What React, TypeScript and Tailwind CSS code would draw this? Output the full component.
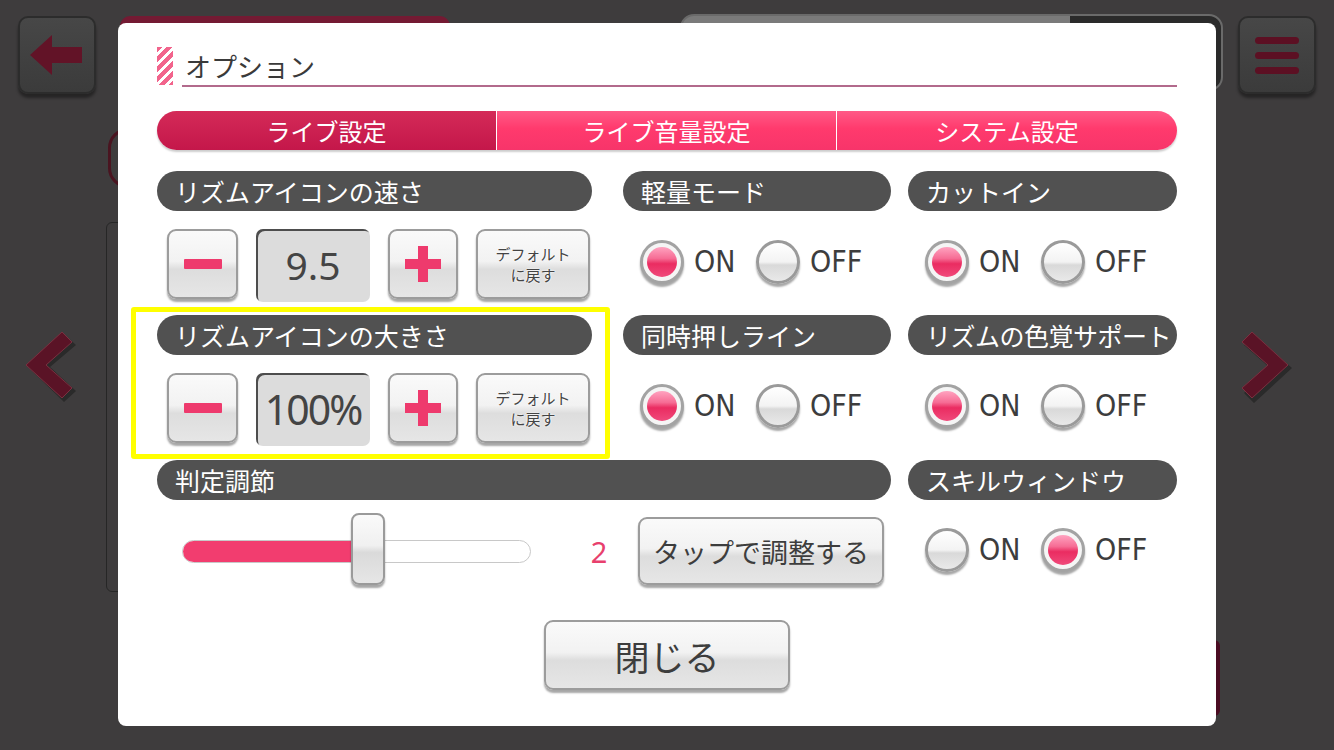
import React from "react";

const jp = "font-['Noto_Sans_CJK_JP','Noto_Sans',sans-serif]";
const narrow = "font-['Liberation_Sans_Narrow','DejaVu_Sans_Condensed',Roboto,sans-serif]";

const btnFace =
  "rounded-[9px] border-2 border-[#9c9c9c] bg-[linear-gradient(180deg,#fafafa_0%,#f2f2f2_46%,#dddddd_58%,#e6e6e6_100%)] shadow-[0_3px_2px_rgba(0,0,0,0.35)]";

// Section header pill
const Label: React.FC<{ text: string; className?: string }> = ({ text, className }) => (
  <div
    className={`h-[40px] rounded-full bg-[#515151] pl-[18px] flex items-center text-white text-[25px] leading-none ${jp} ${className ?? ""}`}
  >
    {text}
  </div>
);

const Radio: React.FC<{ on: boolean }> = ({ on }) =>
  on ? (
    <div className="w-[44px] h-[44px] rounded-full border-[3px] border-[#a3a3a3] bg-[#f5f5f5] p-[4px] shadow-[0_3px_2px_rgba(0,0,0,0.35)]">
      <div className="w-full h-full rounded-full bg-[linear-gradient(180deg,#ffa3c0_0%,#f66d95_38%,#ea2c61_56%,#f04a7b_100%)]" />
    </div>
  ) : (
    <div className="w-[44px] h-[44px] rounded-full border-[3px] border-[#9a9a9a] bg-[linear-gradient(180deg,#ffffff_0%,#f3f3f3_50%,#d9d9d9_58%,#e9e9e9_100%)] shadow-[0_3px_2px_rgba(0,0,0,0.35)]" />
  );

// ON / OFF pair
const Toggle: React.FC<{ on: boolean }> = ({ on }) => (
  <div className="flex items-center pl-[17px]">
    <div className="w-[116px] flex items-center">
      <Radio on={on} />
      <span className={`ml-[10px] text-[30px] leading-none text-[#3d3d3d] ${narrow}`}>ON</span>
    </div>
    <div className="flex items-center">
      <Radio on={!on} />
      <span className={`ml-[10px] text-[30px] leading-none text-[#3d3d3d] ${narrow}`}>OFF</span>
    </div>
  </div>
);

const Stepper: React.FC<{ value: string; big?: boolean }> = ({ value, big }) => (
  <div className="flex items-start pl-[10px] h-[73px]">
    <div className={`w-[71px] h-[70px] flex items-center justify-center ${btnFace}`}>
      <div className="w-[38px] h-[10px] bg-[#ee3a6d] rounded-[1px]" />
    </div>
    <div
      className={`ml-[18px] w-[114px] h-[73px] rounded-[7px] bg-[#dcdcdc] shadow-[inset_2px_2px_0_#4d4d4d] flex items-center justify-center text-[#444] font-['Noto_Sans',sans-serif] ${big ? "text-[41px] tracking-[-2px]" : "text-[39px]"}`}
    >
      {value}
    </div>
    <div className={`ml-[18px] w-[70px] h-[70px] relative ${btnFace}`}>
      <div className="absolute left-1/2 top-1/2 -translate-x-1/2 -translate-y-1/2 w-[36px] h-[10px] bg-[#ee3a6d]" />
      <div className="absolute left-1/2 top-1/2 -translate-x-1/2 -translate-y-1/2 w-[10px] h-[36px] bg-[#ee3a6d]" />
    </div>
    <div
      className={`ml-[18px] w-[114px] h-[70px] flex flex-col items-center justify-center text-[15px] leading-[21px] text-[#444] ${jp} ${btnFace} [text-shadow:0_0_2px_#fff,0_0_2px_#fff]`}
    >
      <span>デフォルト</span>
      <span>に戻す</span>
    </div>
  </div>
);

const App: React.FC = () => {
  return (
    <div className="relative w-[1334px] h-[750px] overflow-hidden bg-[#3e3c3d]">
      {/* dimmed screen behind the dialog */}
      <div className="absolute left-[18px] top-[16px] w-[78px] h-[78px] rounded-[10px] bg-[linear-gradient(180deg,#474747,#3b3b3b)] border-2 border-[#2c2c2c] shadow-[0_4px_3px_rgba(0,0,0,0.4)] flex items-center justify-center">
        <svg width="54" height="40" viewBox="0 0 54 40">
          <polygon points="0,20 22,0 22,12 52,12 52,28 22,28 22,40" fill="#621327" />
        </svg>
      </div>
      <div className="absolute left-[1238px] top-[16px] w-[78px] h-[78px] rounded-[10px] bg-[linear-gradient(180deg,#474747,#3b3b3b)] border-2 border-[#2c2c2c] shadow-[0_4px_3px_rgba(0,0,0,0.4)] flex flex-col items-center justify-center gap-[8px]">
        <div className="w-[44px] h-[7px] rounded-full bg-[#5c1023]" />
        <div className="w-[44px] h-[7px] rounded-full bg-[#5c1023]" />
        <div className="w-[44px] h-[7px] rounded-full bg-[#5c1023]" />
      </div>
      <div className="absolute left-[120px] top-[16px] w-[330px] h-[20px] rounded-t-[10px] bg-[#741a33]" />
      <div className="absolute left-[680px] top-[14px] w-[543px] h-[77px] rounded-[14px] border-2 border-[#6a6a6a] bg-[linear-gradient(90deg,#7a7a7a_0%,#7a7a7a_72%,#2a2a2a_72%,#2a2a2a_100%)]" />
      <div className="absolute left-[106px] top-[222px] w-[30px] h-[370px] rounded-[6px] border border-[#262626]" />
      <div className="absolute left-[108px] top-[128px] w-[40px] h-[60px] rounded-full border-[3px] border-[#4a1420]" />
      <svg className="absolute left-[24px] top-[331px]" width="52" height="74" viewBox="0 0 52 74">
        <polygon points="4,36 40,3 52,14 26,36 52,60 40,71" fill="#2a2a2a" />
        <polygon points="2,34 38,1 48,11 22,34 48,57 38,67" fill="#5a1326" stroke="#7a3040" strokeWidth="1" />
      </svg>
      <svg className="absolute left-[1240px] top-[331px]" width="54" height="74" viewBox="0 0 54 74">
        <polygon points="14,4 52,37 14,72 4,62 30,37 4,14" fill="#2a2a2a" />
        <polygon points="12,1 48,34 12,67 2,57 28,34 2,11" fill="#5a1326" stroke="#7a3040" strokeWidth="1" />
      </svg>
      <div className="absolute left-[1210px] top-[640px] w-[10px] h-[76px] rounded-r-[6px] bg-[#4a0c22]" />

      {/* dialog */}
      <div className="absolute left-[118px] top-[23px] w-[1098px] h-[703px] rounded-[8px] bg-white px-[39px] pt-[24px]">
        {/* title */}
        <div className="flex items-end h-[40px]">
          <div className="w-[16px] h-[38px] mb-[2px] bg-[repeating-linear-gradient(135deg,#f2648c_0px,#f2648c_4px,#ffffff_4px,#ffffff_7px)]" />
          <div className={`ml-[9px] flex-1 h-full border-b-2 border-[#b26a8c] pl-[3px] flex items-center text-[26px] leading-none text-[#3a3a3a] ${jp}`}>
            オプション
          </div>
        </div>

        {/* tabs */}
        <div className={`mt-[24px] h-[39px] flex rounded-full overflow-hidden shadow-[0_2px_2px_rgba(0,0,0,0.2)] text-white text-[24px] leading-none ${jp}`}>
          <div className="w-[339px] flex items-center justify-center bg-[linear-gradient(180deg,#d42a58_0%,#c4174a_100%)]">ライブ設定</div>
          <div className="w-[1px] bg-white" />
          <div className="w-[339px] flex items-center justify-center bg-[linear-gradient(180deg,#ff5a87_0%,#ff3a6d_45%,#f7346a_100%)]">ライブ音量設定</div>
          <div className="w-[1px] bg-white" />
          <div className="flex-1 flex items-center justify-center bg-[linear-gradient(180deg,#ff5a87_0%,#ff3a6d_45%,#f7346a_100%)]">システム設定</div>
        </div>

        {/* row 1 */}
        <div className="mt-[21px] flex">
          <div className="w-[435px]">
            <Label text="リズムアイコンの速さ" />
            <div className="mt-[18px]">
              <Stepper value="9.5" />
            </div>
          </div>
          <div className="ml-[31px] w-[268px]">
            <Label text="軽量モード" />
            <div className="mt-[18px] h-[73px] flex items-center pb-[8px]">
              <Toggle on />
            </div>
          </div>
          <div className="ml-[17px] w-[269px]">
            <Label text="カットイン" />
            <div className="mt-[18px] h-[73px] flex items-center pb-[8px]">
              <Toggle on />
            </div>
          </div>
        </div>

        {/* row 2 */}
        <div className="mt-[13px] flex">
          <div className="w-[435px] relative">
            <Label text="リズムアイコンの大きさ" />
            <div className="mt-[18px]">
              <Stepper value="100%" big />
            </div>
            <div className="absolute -left-[26px] -right-[18px] -top-[8px] -bottom-[13px] border-[5px] border-[#ffff00] rounded-[3px] pointer-events-none" />
          </div>
          <div className="ml-[31px] w-[268px]">
            <Label text="同時押しライン" />
            <div className="mt-[18px] h-[73px] flex items-center pb-[8px]">
              <Toggle on />
            </div>
          </div>
          <div className="ml-[17px] w-[269px]">
            <Label text="リズムの色覚サポート" className="pl-[16px] text-[24px] tracking-[-0.5px]" />
            <div className="mt-[18px] h-[73px] flex items-center pb-[8px]">
              <Toggle on />
            </div>
          </div>
        </div>

        {/* row 3 */}
        <div className="mt-[14px] flex">
          <div className="w-[734px]">
            <Label text="判定調節" className="h-[39px]" />
            <div className="mt-[15px] h-[72px] flex items-center">
              <div className="ml-[25px] w-[349px] h-[23px] rounded-full border border-[#c8c8c8] bg-white relative">
                <div className="absolute left-0 top-0 bottom-0 w-[176px] rounded-l-full bg-[#f23d6f]" />
                <div className="absolute left-[168px] -top-[28px] w-[34px] h-[72px] rounded-[8px] border-2 border-[#9a9a9a] bg-[linear-gradient(180deg,#fafafa_0%,#f0f0f0_45%,#dadada_55%,#e6e6e6_100%)] shadow-[0_3px_2px_rgba(0,0,0,0.35)]" />
              </div>
              <div className="ml-[58px] w-[20px] text-center text-[29px] leading-none text-[#e8406d] font-['Noto_Sans',sans-serif]">2</div>
              <div className={`ml-[29px] w-[246px] h-[68px] flex items-center justify-center text-[27px] leading-none text-[#3d3d3d] ${jp} ${btnFace}`}>
                タップで調整する
              </div>
            </div>
          </div>
          <div className="ml-[17px] w-[269px]">
            <Label text="スキルウィンドウ" className="h-[39px]" />
            <div className="mt-[15px] h-[72px] flex items-center pb-[2px]">
              <Toggle on={false} />
            </div>
          </div>
        </div>

        {/* close */}
        <div className="mt-[33px] flex justify-center">
          <div className={`w-[246px] h-[70px] flex items-center justify-center text-[35px] leading-none text-[#3d3d3d] ${jp} ${btnFace}`}>
            閉じる
          </div>
        </div>
      </div>
    </div>
  );
};

export default App;
